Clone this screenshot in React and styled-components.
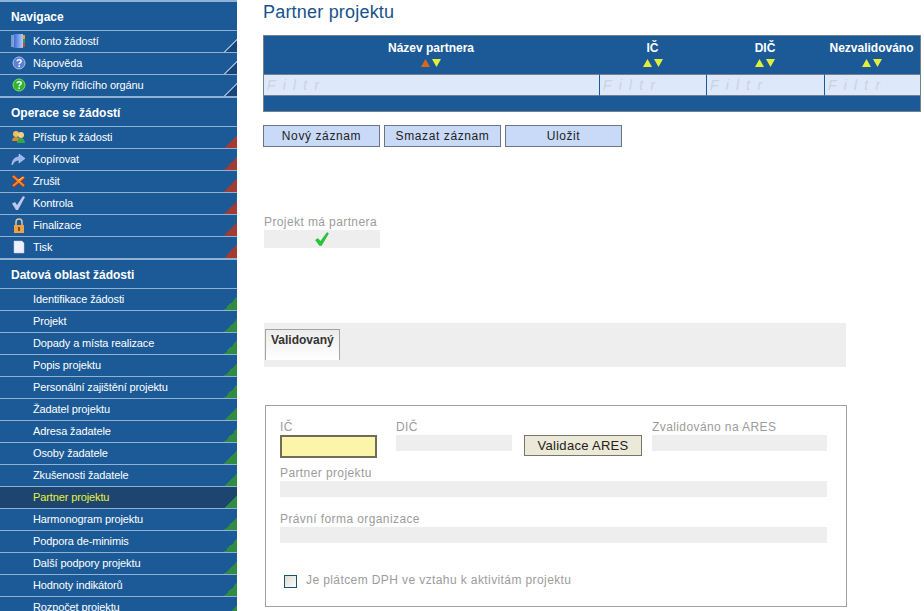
import React from "react";
import styled, { createGlobalStyle } from "styled-components";

const GlobalStyle = createGlobalStyle`
  html, body {
    margin: 0;
    padding: 0;
    height: 611px;
    overflow: hidden;
    background: #fff;
    font-family: "Liberation Sans", Arial, sans-serif;
  }
`;

const Page = styled.div`
  display: flex;
  width: 924px;
  height: 611px;
  overflow: hidden;
`;

const Sidebar = styled.nav`
  width: 237px;
  flex: none;
  height: 611px;
  overflow: hidden;
  background: #1b5a96;
  border-top: 2px solid #8fb2d4;
  box-sizing: border-box;
`;

const SectionTitle = styled.div`
  height: 29px;
  box-sizing: border-box;
  padding: 8px 0 0 11px;
  font-size: 12px;
  font-weight: bold;
  line-height: 14px;
  color: #fff;
  border-bottom: 1px solid #8fb2d4;
`;

const corners = {
  nav: "transparent 48%, #8fb2d4 48%, #8fb2d4 54%, #17457a 54%",
  action: "transparent 50%, #a23b32 50%",
  data: "transparent 50%, #2f8c42 50%",
};

const Item = styled.div`
  height: ${(props) => (props.$last ? "23px" : "22px")};
  box-sizing: border-box;
  display: flex;
  align-items: center;
  padding: 0 0 1px 11px;
  font-size: 11px;
  letter-spacing: -0.12px;
  color: ${(props) => (props.$active ? "#e8f23c" : "#fff")};
  border-bottom: ${(props) => (props.$last ? "2px" : "1px")} solid #8fb2d4;
  background-color: ${(props) => (props.$active ? "#1d4570" : "#1b5a96")};
  background-image: linear-gradient(to bottom right, ${(props) => corners[props.$kind]});
  background-size: 13px 13px;
  background-position: right bottom;
  background-repeat: no-repeat;
`;

const IconSlot = styled.span`
  width: 22px;
  flex: none;
  display: flex;
  align-items: center;
`;

const ItemLabel = styled.span`
  padding-left: ${(props) => (props.$plain ? "22px" : "0")};
`;

const Main = styled.main`
  flex: 1;
  padding: 0 0 0 26px;
  min-width: 0;
`;

const Title = styled.h1`
  margin: 0;
  height: 35px;
  box-sizing: border-box;
  padding-top: 2px;
  font-size: 18px;
  line-height: 21px;
  font-weight: normal;
  letter-spacing: 0.2px;
  color: #17528a;
`;

const Table = styled.div`
  width: 658px;
  box-sizing: border-box;
  border: 1px solid #74808c;
  background: #1b5a96;
  display: grid;
  grid-template-columns: 336px 107px 118px 95px;
`;

const HeadCell = styled.div`
  height: 38px;
  box-sizing: border-box;
  padding: 5px 2px 0 0;
  text-align: center;
  color: #fff;
  font-size: 12px;
  font-weight: bold;
  line-height: 14px;
  white-space: nowrap;
`;

const Arrows = styled.svg`
  display: block;
  margin: 4px auto 0;
`;

const FilterCell = styled.div`
  height: 22px;
  box-sizing: border-box;
  border-top: 1px solid #74808c;
  border-bottom: 1px solid #74808c;
  border-right: ${(props) => (props.$last ? "0" : "1px solid #1b5a96")};
  background: #dde8fb;
  padding-left: 3px;
  font-size: 14px;
  line-height: 20px;
  font-style: italic;
  letter-spacing: 7.2px;
  color: #ced2da;
  overflow: hidden;
  white-space: nowrap;
`;

const TableFoot = styled.div`
  grid-column: 1 / -1;
  height: 15px;
`;

const ButtonRow = styled.div`
  display: flex;
  gap: 4px;
  margin-top: 13px;
`;

const ActionButton = styled.button`
  width: 117px;
  height: 22px;
  box-sizing: border-box;
  padding: 0;
  border: 1px solid #6a7783;
  background: #c9daf8;
  color: #222;
  font-family: "Liberation Sans", Arial, sans-serif;
  font-size: 12px;
  letter-spacing: 0.6px;
`;

const Label = styled.div`
  font-size: 12px;
  line-height: 12px;
  height: 14px;
  letter-spacing: 0.4px;
  color: #9c9c9c;
  white-space: nowrap;
`;

const PartnerBlock = styled.div`
  width: 116px;
  margin: 69px 0 0 1px;
`;

const ReadField = styled.div`
  height: ${(props) => props.$h || 16}px;
  background: #eeeeee;
  display: flex;
  align-items: center;
  justify-content: center;
`;

const TabStrip = styled.div`
  width: 582px;
  height: 44px;
  margin: 75px 0 0 1px;
  padding: 6px 0 0 1px;
  box-sizing: border-box;
  background: #eeeeee;
`;

const Tab = styled.div`
  width: 75px;
  height: 31px;
  box-sizing: border-box;
  border: 1px solid #a3a3a3;
  border-bottom: 0;
  padding: 3px 0 0 5px;
  background: linear-gradient(to bottom, #ececec, #ffffff);
  font-size: 12px;
  line-height: 14px;
  font-weight: bold;
  color: #333;
`;

const FormBox = styled.div`
  width: 582px;
  height: 202px;
  margin: 38px 0 0 2px;
  padding: 15px 19px 0 14px;
  box-sizing: border-box;
  border: 1px solid #a3a3a3;
`;

const FieldRow = styled.div`
  display: flex;
  align-items: flex-start;
`;

const Column = styled.div`
  width: ${(props) => props.$w}px;
  margin-right: ${(props) => props.$mr || 0}px;
`;

const RequiredInput = styled.div`
  height: 23px;
  box-sizing: border-box;
  border: 2px solid #6f6c58;
  background: #fbf5a9;
`;

const AresButton = styled.button`
  width: 118px;
  height: 21px;
  margin: 14px 10px 0 0;
  padding: 0;
  box-sizing: border-box;
  border: 1px solid #77756a;
  background: #ece9d8;
  color: #222;
  font-family: "Liberation Sans", Arial, sans-serif;
  font-size: 13px;
  letter-spacing: 0.3px;
`;

const WideField = styled.div`
  margin-top: ${(props) => props.$mt}px;
`;

const CheckRow = styled.div`
  display: flex;
  align-items: center;
  gap: 9px;
  margin: 31px 0 0 4px;
`;

const CheckBox = styled.span`
  width: 13px;
  height: 13px;
  box-sizing: border-box;
  border: 1px solid #1d5170;
  background: linear-gradient(135deg, #dcdcd6, #fbfbfb);
`;

const BookIcon = () => (
  <svg width="15" height="14" viewBox="0 0 15 14">
    <defs>
      <linearGradient id="bookFill" x1="0" x2="1" y1="0" y2="0">
        <stop offset="0" stopColor="#2f62d8" />
        <stop offset="1" stopColor="#b4ccf8" />
      </linearGradient>
    </defs>
    <rect x="2" y="0" width="10" height="14" fill="url(#bookFill)" />
    <path d="M0 2h3M0 4h3M0 6h3M0 8h3M0 10h3M0 12h3" stroke="#d8dde6" strokeWidth="1" />
    <rect x="12" y="1" width="2" height="4" fill="#d9a13a" />
    <rect x="12" y="5" width="2" height="4" fill="#3a9a4a" />
    <rect x="12" y="9" width="2" height="4" fill="#c9452f" />
  </svg>
);

const HelpIcon = ({ fill, ring }) => (
  <svg width="15" height="14" viewBox="0 0 15 14">
    <circle cx="8" cy="7" r="6" fill={fill} stroke={ring} />
    <path d="M6 5.2c.2-2 4.2-2 4.2.1 0 1.4-2 1.4-2 3" fill="none" stroke="#fff" strokeWidth="1.5" />
    <rect x="7.4" y="9.4" width="1.6" height="1.6" fill="#fff" />
  </svg>
);

const PeopleIcon = () => (
  <svg width="15" height="14" viewBox="0 0 15 14">
    <path d="M1 11c0-3 2-4 4-4s4 1 4 4z" fill="#d98a2c" />
    <circle cx="5" cy="4" r="3" fill="#f0c060" />
    <path d="M6 13c0-3 2-5 4-5s4 2 4 5z" fill="#34a84e" />
    <circle cx="10" cy="5" r="3" fill="#f2d080" />
  </svg>
);

const ArrowIcon = () => (
  <svg width="15" height="14" viewBox="0 0 15 14">
    <path d="M1 13c0-5 3-8 7-8V2l6 4.5L8 11V8C5 8 3 9.5 1 13z" fill="#9db3ee" stroke="#dfe6fb" strokeWidth=".5" />
  </svg>
);

const CrossIcon = () => (
  <svg width="15" height="14" viewBox="0 0 15 14">
    <path d="M2 2l11 10M13 3L2 12" stroke="#a8321a" strokeWidth="3.6" />
    <path d="M2 2l11 10M13 3L2 12" stroke="#f08a2c" strokeWidth="2.2" />
    <path d="M7 6.5l5-3.5" stroke="#f9d77a" strokeWidth="1" />
  </svg>
);

const TickIcon = () => (
  <svg width="15" height="14" viewBox="0 0 15 14">
    <path d="M1 7.5L4 6l2 3 6-9 2 1-7 13H5z" fill="#bcc8ec" />
  </svg>
);

const LockIcon = () => (
  <svg width="15" height="15" viewBox="0 0 15 15">
    <path d="M5 7V4a3 3 0 0 1 6 0v3" fill="none" stroke="#d8c9a0" strokeWidth="1.5" />
    <rect x="3" y="7" width="10" height="8" fill="#eda24a" />
    <rect x="7" y="9" width="2" height="4" fill="#8a4a18" />
  </svg>
);

const PageIcon = () => (
  <svg width="15" height="14" viewBox="0 0 15 14">
    <path d="M3 1h8l2 2v10H3z" fill="#eef1fb" stroke="#bcc6e6" strokeWidth=".5" />
  </svg>
);

const GreenCheck = () => (
  <svg width="14" height="14" viewBox="0 0 14 14">
    <path d="M0.5 8L3 6.5 5.5 9.5 12 0.5 13.5 1.5 6.5 13.5H4.5z" fill="#22cc30" stroke="#10931f" strokeWidth=".4" />
  </svg>
);

const SortArrows = ({ active }) => (
  <Arrows width="22" height="8" viewBox="0 0 22 8">
    <path d="M1 8l4.5-8L10 8z" fill={active ? "#d9661c" : "#e3ee3a"} />
    <path d="M12 0h9l-4.5 8z" fill="#e3ee3a" />
  </Arrows>
);

const navigace = [
  { label: "Konto žádostí", icon: <BookIcon /> },
  { label: "Nápověda", icon: <HelpIcon fill="#5a80d8" ring="#aebcec" /> },
  { label: "Pokyny řídícího orgánu", icon: <HelpIcon fill="#2fb52f" ring="#7fe060" /> },
];

const operace = [
  { label: "Přístup k žádosti", icon: <PeopleIcon /> },
  { label: "Kopírovat", icon: <ArrowIcon /> },
  { label: "Zrušit", icon: <CrossIcon /> },
  { label: "Kontrola", icon: <TickIcon /> },
  { label: "Finalizace", icon: <LockIcon /> },
  { label: "Tisk", icon: <PageIcon /> },
];

const datova = [
  "Identifikace žádosti",
  "Projekt",
  "Dopady a místa realizace",
  "Popis projektu",
  "Personální zajištění projektu",
  "Žadatel projektu",
  "Adresa žadatele",
  "Osoby žadatele",
  "Zkušenosti žadatele",
  "Partner projektu",
  "Harmonogram projektu",
  "Podpora de-minimis",
  "Další podpory projektu",
  "Hodnoty indikátorů",
  "Rozpočet projektu",
];

const columns = [
  { name: "Název partnera", active: true },
  { name: "IČ" },
  { name: "DIČ" },
  { name: "Nezvalidováno" },
];

function App() {
  return (
    <Page>
      <GlobalStyle />
      <Sidebar>
        <SectionTitle>Navigace</SectionTitle>
        {navigace.map((item, i) => (
          <Item key={item.label} $kind="nav" $last={i === navigace.length - 1}>
            <IconSlot>{item.icon}</IconSlot>
            <ItemLabel>{item.label}</ItemLabel>
          </Item>
        ))}
        <SectionTitle>Operace se žádostí</SectionTitle>
        {operace.map((item, i) => (
          <Item key={item.label} $kind="action" $last={i === operace.length - 1}>
            <IconSlot>{item.icon}</IconSlot>
            <ItemLabel>{item.label}</ItemLabel>
          </Item>
        ))}
        <SectionTitle>Datová oblast žádosti</SectionTitle>
        {datova.map((label) => (
          <Item key={label} $kind="data" $active={label === "Partner projektu"}>
            <ItemLabel $plain>{label}</ItemLabel>
          </Item>
        ))}
      </Sidebar>
      <Main>
        <Title>Partner projektu</Title>
        <Table>
          {columns.map((col) => (
            <HeadCell key={col.name}>
              {col.name}
              <SortArrows active={col.active} />
            </HeadCell>
          ))}
          {columns.map((col, i) => (
            <FilterCell key={col.name} $last={i === columns.length - 1}>
              Filtr
            </FilterCell>
          ))}
          <TableFoot />
        </Table>
        <ButtonRow>
          <ActionButton>Nový záznam</ActionButton>
          <ActionButton>Smazat záznam</ActionButton>
          <ActionButton>Uložit</ActionButton>
        </ButtonRow>
        <PartnerBlock>
          <Label>Projekt má partnera</Label>
          <ReadField $h={18}>
            <GreenCheck />
          </ReadField>
        </PartnerBlock>
        <TabStrip>
          <Tab>Validovaný</Tab>
        </TabStrip>
        <FormBox>
          <FieldRow>
            <Column $w={97} $mr={19}>
              <Label>IČ</Label>
              <RequiredInput />
            </Column>
            <Column $w={116} $mr={12}>
              <Label>DIČ</Label>
              <ReadField />
            </Column>
            <AresButton>Validace ARES</AresButton>
            <Column $w={175}>
              <Label>Zvalidováno na ARES</Label>
              <ReadField />
            </Column>
          </FieldRow>
          <WideField $mt={9}>
            <Label>Partner projektu</Label>
            <ReadField />
          </WideField>
          <WideField $mt={16}>
            <Label>Právní forma organizace</Label>
            <ReadField />
          </WideField>
          <CheckRow>
            <CheckBox />
            <Label>Je plátcem DPH ve vztahu k aktivitám projektu</Label>
          </CheckRow>
        </FormBox>
      </Main>
    </Page>
  );
}

export default App;
